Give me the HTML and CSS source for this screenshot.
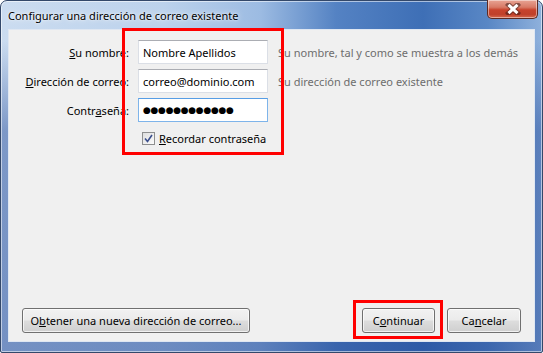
FILE: index.html
```html
<!DOCTYPE html>
<html lang="es">
<head>
<meta charset="utf-8">
<title>Configurar una dirección de correo existente</title>
<link rel="stylesheet" href="styles.css">
</head>
<body>
<div class="window">
  <div class="titlebar">
    <span class="title">Configurar una dirección de correo existente</span>
    <button class="close" aria-label="Cerrar">
      <svg width="16" height="12" viewBox="0 0 16 12">
        <path d="M3.5 1.8 L12.5 10.2 M12.5 1.8 L3.5 10.2" fill="none" stroke="#3a1a16" stroke-width="5" stroke-linecap="square" opacity="0.55"/>
        <path d="M3.5 1.8 L12.5 10.2 M12.5 1.8 L3.5 10.2" fill="none" stroke="#fff" stroke-width="3"/>
      </svg>
    </button>
  </div>
  <div class="client">
    <div class="form">
      <label class="lbl" for="nombre"><u>S</u>u nombre:</label>
      <input class="tb" id="nombre" value="Nombre Apellidos">
      <span class="hint">Su nombre, tal y como se muestra a los demás</span>

      <label class="lbl" for="correo"><u>D</u>irección de correo:</label>
      <input class="tb" id="correo" value="correo@dominio.com">
      <span class="hint">Su dirección de correo existente</span>

      <label class="lbl" for="pass">Contr<u>a</u>seña:</label>
      <div class="tb focus pw" id="pass">●●●●●●●●●●●●</div>
      <span class="hint"></span>

      <span></span>
      <label class="check"><span class="box"><svg width="9" height="9" viewBox="0 0 9 9"><path d="M1 4.5 L3.5 7.5 L8 1" fill="none" stroke="#3b4f8c" stroke-width="1.6"/></svg></span><span><u>R</u>ecordar contraseña</span></label>
    </div>
    <div class="spacer"></div>
    <div class="buttons">
      <button class="btn wide">O<u>b</u>tener una nueva dirección de correo...</button>
      <div class="right">
        <button class="btn">C<u>o</u>ntinuar</button>
        <button class="btn">Ca<u>n</u>celar</button>
      </div>
    </div>
  </div>
  <div class="mark mark-form"></div>
  <div class="mark mark-btn"></div>
</div>
</body>
</html>
```
FILE: styles.css
```css
* { box-sizing: border-box; }
html, body { margin: 0; padding: 0; }
body {
  width: 543px;
  height: 353px;
  overflow: hidden;
  font-family: "Noto Sans", "DejaVu Sans", sans-serif;
  font-size: 11px;
  background: #fff;
}
.window {
  position: relative;
  width: 543px;
  height: 353px;
  border: 1px solid #33486a;
  border-radius: 7px 7px 2px 2px;
  background:
    linear-gradient(180deg, rgba(30,70,150,0) 0px, rgba(30,70,150,0) 40px, rgba(30,70,150,0.45) 130px, rgba(30,70,150,0.5) 100%),
    linear-gradient(90deg, #cbdcf0 0%, #bcd2ec 30%, #9cbbe2 48%, #5482c3 62%, #3e6fb6 78%, #5987c5 90%, #8fb1dc 100%);
  display: flex;
  flex-direction: column;
  padding: 0 7px 10px 7px;
  box-shadow: inset 0 0 0 1px rgba(255,255,255,0.55);
}
.titlebar {
  height: 28px;
  display: flex;
  align-items: flex-start;
  justify-content: space-between;
  flex-shrink: 0;
}
.title {
  margin-top: 7px;
  color: #000;
  font-size: 11px;
  text-shadow: 0 0 6px rgba(255,255,255,0.9), 0 0 2px rgba(255,255,255,0.9);
}
.close {
  width: 51px;
  height: 19px;
  margin: -1px -3px 0 0;
  border: 1px solid #5d2a22;
  border-top: none;
  border-radius: 0 0 5px 5px;
  background: linear-gradient(180deg, #e8a494 0%, #d87a66 40%, #c8432c 55%, #c0402a 80%, #d66a4e 100%);
  box-shadow: inset 0 0 0 1px rgba(255,255,255,0.45);
  display: flex;
  align-items: center;
  justify-content: center;
  padding: 0;
}
.client {
  flex: 1;
  background: #f0f0f0;
  border: 1px solid #dfe7f2;
  display: flex;
  flex-direction: column;
  padding: 10px 13px 8px 13px;
}
.form {
  display: grid;
  grid-template-columns: 107px 130px auto;
  column-gap: 9px;
  row-gap: 5px;
  align-items: center;
}
.lbl {
  text-align: right;
  color: #000;
  white-space: nowrap;
}
.lbl, .hint, .check, .btn { font-size: 11px; }
.tb {
  width: 130px;
  height: 24px;
  border: 1px solid #dbdfe6;
  border-top-color: #abadb3;
  background: #fff;
  font-family: inherit;
  font-size: 11px;
  color: #000;
  padding: 0 4px;
  margin: 0;
  outline: none;
}
.tb.focus {
  border: 1px solid #7eb4ea;
  border-top-color: #569de5;
}
.pw {
  display: flex;
  align-items: center;
  font-family: "DejaVu Sans", sans-serif;
  font-size: 9px;
  letter-spacing: -0.3px;
  padding-left: 4px;
}
.hint {
  color: #6d6d6d;
  white-space: nowrap;
  padding-left: 1px;
}
.check {
  grid-column: 2 / span 2;
  display: flex;
  align-items: center;
  gap: 4px;
  margin-top: 4px;
  margin-left: 4px;
  color: #000;
}
.box {
  width: 13px;
  height: 13px;
  border: 1px solid #8e8f8f;
  background: linear-gradient(135deg, #dedede, #fbfbfb);
  display: flex;
  align-items: center;
  justify-content: center;
}
.spacer { flex: 1; }
.buttons {
  display: flex;
  justify-content: space-between;
  align-items: flex-end;
}
.right { display: flex; gap: 12px; }
.btn {
  height: 25px;
  width: 73px;
  border: 1px solid #707070;
  border-radius: 3px;
  background: linear-gradient(180deg, #f2f2f2 0%, #ebebeb 48%, #dddddd 52%, #cfcfcf 100%);
  box-shadow: inset 0 0 0 1px rgba(255,255,255,0.7);
  font-family: inherit;
  color: #000;
  padding: 0;
  white-space: nowrap;
}
.right .btn:last-child { width: 74px; }
.btn.wide { width: 228px; }
.mark {
  position: absolute;
  border: 3px solid #f00;
  pointer-events: none;
}
.mark-form { left: 121px; top: 27px; width: 162px; height: 127px; }
.mark-btn { left: 352px; top: 299px; width: 90px; height: 39px; }
```
